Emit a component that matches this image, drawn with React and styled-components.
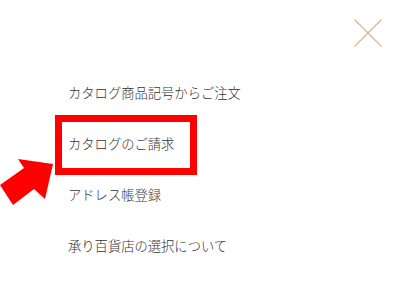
import React from 'react';
import styled, { createGlobalStyle } from 'styled-components';

const GlobalStyle = createGlobalStyle`
    html, body {
        margin: 0;
        padding: 0;
        background: #ffffff;
    }
    body {
        font-family: "Noto Sans CJK JP", "Noto Sans", sans-serif;
        color: #333333;
    }
`;

const Page = styled.div`
    position: relative;
    width: 394px;
    height: 298px;
    overflow: hidden;
    background: #ffffff;
    display: flex;
    flex-direction: column;
`;

const Header = styled.div`
    display: flex;
    justify-content: flex-end;
    padding: 19px 12px 0 0;
`;

const CloseButton = styled.button`
    width: 28px;
    height: 28px;
    padding: 0;
    border: 0;
    background: none;
    cursor: pointer;
    display: block;

    svg {
        display: block;
    }
`;

const Menu = styled.ul`
    list-style: none;
    margin: 0;
    padding: 20px 0 0 68px;
`;

const Item = styled.li`
    position: relative;
    height: 51px;
    line-height: 51px;
    font-size: 13.3px;
    font-weight: 300;
    color: #333333;
    white-space: nowrap;

    &::before {
        content: '';
        display: ${(p) => (p.$highlighted ? 'block' : 'none')};
        position: absolute;
        top: -3px;
        left: -13px;
        width: 142px;
        height: 60px;
        box-sizing: border-box;
        border: 7px solid #ff0000;
        pointer-events: none;
    }
`;

const Arrow = styled.svg`
    position: absolute;
    left: 0;
    top: 155px;
`;

const items = [
    { label: 'カタログ商品記号からご注文' },
    { label: 'カタログのご請求', highlighted: true },
    { label: 'アドレス帳登録' },
    { label: '承り百貨店の選択について' },
];

const App = () => (
    <Page>
        <GlobalStyle />
        <Header>
            <CloseButton aria-label="閉じる">
                <svg width="28" height="28" viewBox="0 0 28 28">
                    <path d="M0.5 0.5L27.5 27.5M27.5 0.5L0.5 27.5" stroke="#d8b890" strokeWidth="1.3" fill="none" />
                </svg>
            </CloseButton>
        </Header>
        <Menu>
            {items.map((item) => (
                <Item key={item.label} $highlighted={item.highlighted}>
                    {item.label}
                </Item>
            ))}
        </Menu>
        <Arrow width="56" height="54" viewBox="0 155 56 54">
            <polygon points="53,164 18,159 24,168 0,185 13,205 34,189 45,199" fill="#ff0000" />
        </Arrow>
    </Page>
);

export default App;
